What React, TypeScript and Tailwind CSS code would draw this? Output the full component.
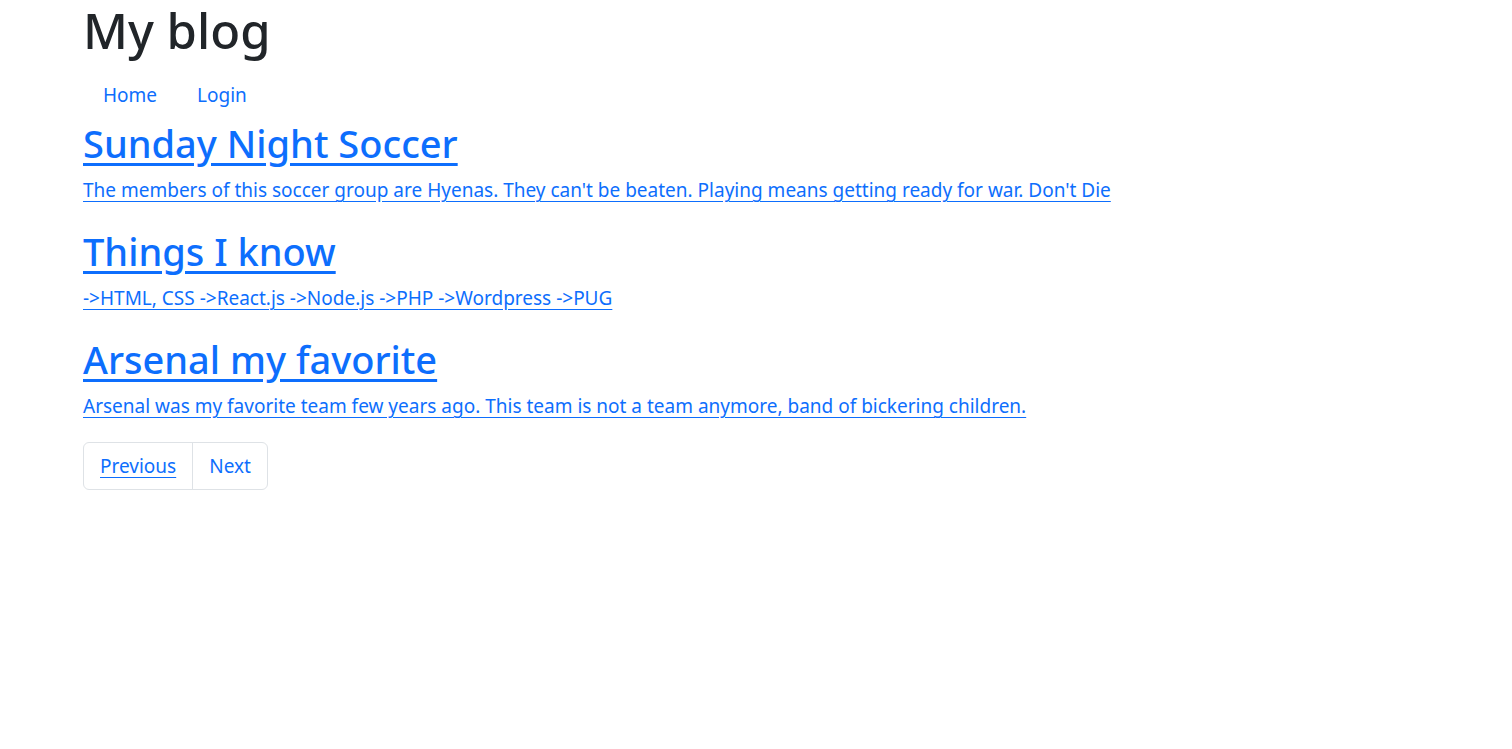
const posts = [
  {
    title: 'Sunday Night Soccer',
    body: "The members of this soccer group are Hyenas. They can't be beaten. Playing means getting ready for war. Don't Die",
  },
  {
    title: 'Things I know',
    body: '->HTML, CSS ->React.js ->Node.js ->PHP ->Wordpress ->PUG',
  },
  {
    title: 'Arsenal my favorite',
    body: 'Arsenal was my favorite team few years ago. This team is not a team anymore, band of bickering children.',
  },
];

export default function App() {
  return (
    <div className="min-h-screen bg-white font-['Noto_Sans',sans-serif] text-[#212529]">
      <div className="pl-[83px]">
        <h1 className="text-[49px] leading-[61px] font-medium text-[#212529]">My blog</h1>

        {/* nav */}
        <nav className="flex mt-[11px]">
          <a href="#" className="px-[20px] py-[8px] text-[19px] leading-[30px] text-[#0d6efd]">
            Home
          </a>
          <a href="#" className="px-[20px] py-[8px] text-[19px] leading-[30px] text-[#0d6efd]">
            Login
          </a>
        </nav>

        {/* posts */}
        <div className="flex flex-col gap-[22px] mt-[1px]">
          {posts.map((post, i) => (
            <div key={i}>
              <a href="#" className="block w-fit text-[38px] leading-[48px] font-medium text-[#0d6efd] underline underline-offset-[5px] mb-[8px]">
                {post.title}
              </a>
              <a href="#" className="block w-fit text-[19px] leading-[30px] text-[#0d6efd] underline underline-offset-[4px]">
                {post.body}
              </a>
            </div>
          ))}
        </div>

        {/* pagination */}
        <div className="flex w-fit mt-[21px] border border-[#dee2e6] rounded-[6px]">
          <a href="#" className="px-[16px] py-[8px] text-[19px] leading-[30px] text-[#0d6efd] underline underline-offset-[4px] border-r border-[#dee2e6]">
            Previous
          </a>
          <a href="#" className="px-[16px] py-[8px] text-[19px] leading-[30px] text-[#0d6efd]">
            Next
          </a>
        </div>
      </div>
    </div>
  );
}
